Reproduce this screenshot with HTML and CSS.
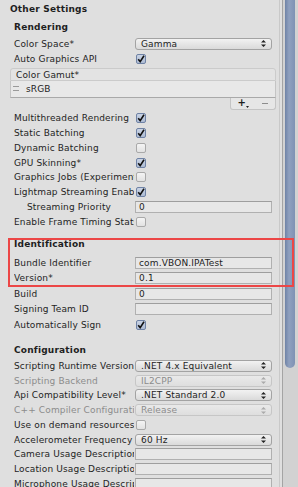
FILE: index.html
```html
<!DOCTYPE html>
<html lang="en">
<head>
    <meta charset="UTF-8">
    <meta name="viewport" content="width=device-width, initial-scale=1.0">
    <title>Player Settings - Other Settings</title>
    <link rel="stylesheet" href="styles.css">
</head>
<body>
<div class="inspector">
    <div class="panel">
        <div class="section-title">Other Settings</div>

        <!-- Rendering -->
        <div class="group-title first">Rendering</div>
        <div class="row">
            <div class="label">Color Space*</div>
            <div class="popup">Gamma<svg class="arrows" width="5" height="7" viewBox="0 0 5 7"><path d="M2.5 0 L5 2.6 L0 2.6 Z M2.5 7 L5 4.4 L0 4.4 Z" fill="#222"/></svg></div>
        </div>
        <div class="row">
            <div class="label">Auto Graphics API</div>
            <div class="checkbox on"><svg width="8" height="8" viewBox="0 0 8 8"><path d="M1.2 4.2 L3.2 6.6 L7 0.8" fill="none" stroke="#111" stroke-width="1.6"/></svg></div>
        </div>
        <div class="list">
            <div class="list-header">Color Gamut*</div>
            <div class="list-body"><span class="handle"></span>sRGB</div>
            <div class="list-footer">
                <span class="plus">+<svg width="3" height="2" viewBox="0 0 3 2"><path d="M0 0 L3 0 L1.5 2 Z" fill="#222"/></svg></span>
                <span class="minus"></span>
            </div>
        </div>
        <div class="row">
            <div class="label">Multithreaded Rendering</div>
            <div class="checkbox on"><svg width="8" height="8" viewBox="0 0 8 8"><path d="M1.2 4.2 L3.2 6.6 L7 0.8" fill="none" stroke="#111" stroke-width="1.6"/></svg></div>
        </div>
        <div class="row">
            <div class="label">Static Batching</div>
            <div class="checkbox on"><svg width="8" height="8" viewBox="0 0 8 8"><path d="M1.2 4.2 L3.2 6.6 L7 0.8" fill="none" stroke="#111" stroke-width="1.6"/></svg></div>
        </div>
        <div class="row">
            <div class="label">Dynamic Batching</div>
            <div class="checkbox"></div>
        </div>
        <div class="row">
            <div class="label">GPU Skinning*</div>
            <div class="checkbox on"><svg width="8" height="8" viewBox="0 0 8 8"><path d="M1.2 4.2 L3.2 6.6 L7 0.8" fill="none" stroke="#111" stroke-width="1.6"/></svg></div>
        </div>
        <div class="row">
            <div class="label">Graphics Jobs (Experimental)</div>
            <div class="checkbox"></div>
        </div>
        <div class="row">
            <div class="label">Lightmap Streaming Enabled</div>
            <div class="checkbox on"><svg width="8" height="8" viewBox="0 0 8 8"><path d="M1.2 4.2 L3.2 6.6 L7 0.8" fill="none" stroke="#111" stroke-width="1.6"/></svg></div>
        </div>
        <div class="row">
            <div class="label indent">Streaming Priority</div>
            <div class="field">0</div>
        </div>
        <div class="row">
            <div class="label">Enable Frame Timing Stats</div>
            <div class="checkbox"></div>
        </div>

        <!-- Identification -->
        <div class="group-title ident">Identification</div>
        <div class="row tall">
            <div class="label">Bundle Identifier</div>
            <div class="field">com.VBON.IPATest</div>
        </div>
        <div class="row tall">
            <div class="label">Version*</div>
            <div class="field">0.1</div>
        </div>
        <div class="row tall">
            <div class="label">Build</div>
            <div class="field">0</div>
        </div>
        <div class="row tall">
            <div class="label">Signing Team ID</div>
            <div class="field"></div>
        </div>
        <div class="row tall">
            <div class="label">Automatically Sign</div>
            <div class="checkbox on"><svg width="8" height="8" viewBox="0 0 8 8"><path d="M1.2 4.2 L3.2 6.6 L7 0.8" fill="none" stroke="#111" stroke-width="1.6"/></svg></div>
        </div>

        <!-- Configuration -->
        <div class="group-title config">Configuration</div>
        <div class="row">
            <div class="label">Scripting Runtime Version</div>
            <div class="popup">.NET 4.x Equivalent<svg class="arrows" width="5" height="7" viewBox="0 0 5 7"><path d="M2.5 0 L5 2.6 L0 2.6 Z M2.5 7 L5 4.4 L0 4.4 Z" fill="#222"/></svg></div>
        </div>
        <div class="row disabled">
            <div class="label">Scripting Backend</div>
            <div class="popup">IL2CPP<svg class="arrows" width="5" height="7" viewBox="0 0 5 7"><path d="M2.5 0 L5 2.6 L0 2.6 Z M2.5 7 L5 4.4 L0 4.4 Z" fill="#aaa"/></svg></div>
        </div>
        <div class="row">
            <div class="label">Api Compatibility Level*</div>
            <div class="popup">.NET Standard 2.0<svg class="arrows" width="5" height="7" viewBox="0 0 5 7"><path d="M2.5 0 L5 2.6 L0 2.6 Z M2.5 7 L5 4.4 L0 4.4 Z" fill="#222"/></svg></div>
        </div>
        <div class="row disabled">
            <div class="label">C++ Compiler Configuration</div>
            <div class="popup">Release<svg class="arrows" width="5" height="7" viewBox="0 0 5 7"><path d="M2.5 0 L5 2.6 L0 2.6 Z M2.5 7 L5 4.4 L0 4.4 Z" fill="#aaa"/></svg></div>
        </div>
        <div class="row">
            <div class="label">Use on demand resources</div>
            <div class="checkbox"></div>
        </div>
        <div class="row">
            <div class="label">Accelerometer Frequency</div>
            <div class="popup">60 Hz<svg class="arrows" width="5" height="7" viewBox="0 0 5 7"><path d="M2.5 0 L5 2.6 L0 2.6 Z M2.5 7 L5 4.4 L0 4.4 Z" fill="#222"/></svg></div>
        </div>
        <div class="row">
            <div class="label">Camera Usage Description</div>
            <div class="field"></div>
        </div>
        <div class="row">
            <div class="label">Location Usage Description</div>
            <div class="field"></div>
        </div>
        <div class="row">
            <div class="label">Microphone Usage Description</div>
            <div class="field"></div>
        </div>
    </div>
    <div class="gutter"></div>
    <div class="scrollbar"><div class="thumb"></div></div>

    <!-- marcação vermelha -->
    <div class="highlight"></div>
</div>
</body>
</html>
```

FILE: styles.css
```css
body {
    margin: 0;
    padding: 0;
    font-family: "DejaVu Sans", sans-serif;
    font-size: 9px;
    letter-spacing: 0.15px;
    color: #1e1e1e;
    background-color: #dfdfdf;
}
.inspector {
    position: relative;
    display: flex;
    height: 487px;
    overflow: hidden;
}
.panel {
    width: 279px;
    border-right: 1px solid #c9c9c9;
}
.gutter {
    width: 2px;
    border-right: 1px solid #a4a4a4;
}
.scrollbar {
    width: 15px;
    padding: 0 3px 0 2px;
    box-sizing: border-box;
    background-color: #d2d2d2;
}
.thumb {
    height: 368px;
    border-radius: 0 0 5px 5px;
    background: linear-gradient(to right, #6f83a6, #8fa0bf 40%, #7f92b4);
}
.section-title {
    height: 18px;
    line-height: 18px;
    padding-left: 10px;
    font-weight: bold;
    font-size: 9px;
    letter-spacing: 0.2px;
}
.group-title {
    height: 15px;
    line-height: 15px;
    padding-left: 14px;
    margin-top: 8px;
    font-weight: bold;
    font-size: 9px;
    letter-spacing: 0.2px;
}
.group-title.first {
    margin-top: 2px;
    margin-bottom: 1.5px;
}
.group-title.ident {
    margin-bottom: 3px;
}
.group-title.config {
    margin-top: 10px;
    margin-bottom: 1px;
}
.row {
    display: flex;
    align-items: center;
    height: 14.75px;
    padding-left: 14px;
}
.row.tall {
    height: 15.5px;
}
.label {
    width: 120px;
    margin-right: 1px;
    flex-shrink: 0;
    overflow: hidden;
    white-space: nowrap;
}
.label.indent {
    padding-left: 13px;
    box-sizing: border-box;
}
.disabled {
    color: #8c8c8c;
}
.popup {
    position: relative;
    width: 137px;
    height: 12px;
    line-height: 10px;
    box-sizing: border-box;
    padding-left: 5px;
    border: 1px solid #a3a3a3;
    border-radius: 3px;
    background: linear-gradient(#f2f2f2, #dadada);
    white-space: nowrap;
}
.disabled .popup {
    border-color: #c6c6c6;
    background: linear-gradient(#e9e9e9, #dedede);
}
.popup .arrows {
    position: absolute;
    right: 5px;
    top: 1.5px;
}
.field {
    width: 137px;
    height: 12px;
    line-height: 10px;
    box-sizing: border-box;
    padding-left: 3px;
    border: 1px solid #b0b0b0;
    border-top-color: #9e9e9e;
    background-color: #e7e7e7;
    white-space: nowrap;
    overflow: hidden;
}
.checkbox {
    width: 10px;
    height: 10px;
    margin-left: 1px;
    box-sizing: border-box;
    border: 1px solid #a9a9a9;
    border-radius: 2px;
    background: linear-gradient(#f4f4f4, #e2e2e2);
    display: flex;
    align-items: center;
    justify-content: center;
}
.checkbox.on {
    border-color: #6f82a5;
    background: linear-gradient(#c9d3e4, #aebcd4);
}
/* lista Color Gamut */
.list {
    margin: 1.5px 3px 1.5px 10px;
}
.list-header {
    height: 13px;
    line-height: 12px;
    box-sizing: border-box;
    padding-left: 5px;
    border: 1px solid #cbcbcb;
    border-radius: 3px 3px 0 0;
    background-color: #e3e3e3;
}
.list-body {
    display: flex;
    align-items: center;
    height: 17px;
    box-sizing: border-box;
    padding-left: 2px;
    border: 1px solid #c4c4c4;
    border-top: none;
    border-bottom-color: #a9a9a9;
    background-color: #e8e8e8;
}
.handle {
    width: 6px;
    height: 3px;
    margin-right: 7px;
    border-top: 1px solid #9a9a9a;
    border-bottom: 1px solid #9a9a9a;
}
.list-footer {
    display: flex;
    align-items: center;
    justify-content: space-around;
    width: 46px;
    height: 12px;
    margin-left: auto;
    box-sizing: border-box;
    border: 1px solid #c4c4c4;
    border-top: none;
    border-radius: 0 0 3px 3px;
    background-color: #e6e6e6;
}
.plus {
    font-weight: bold;
    font-size: 10px;
    line-height: 10px;
    display: flex;
    align-items: flex-end;
}
.minus {
    width: 6px;
    height: 1px;
    background-color: #8d8d8d;
}
.highlight {
    position: absolute;
    left: 8px;
    top: 238px;
    width: 286px;
    height: 49px;
    box-sizing: border-box;
    border: 2px solid #ec4646;
}
```
